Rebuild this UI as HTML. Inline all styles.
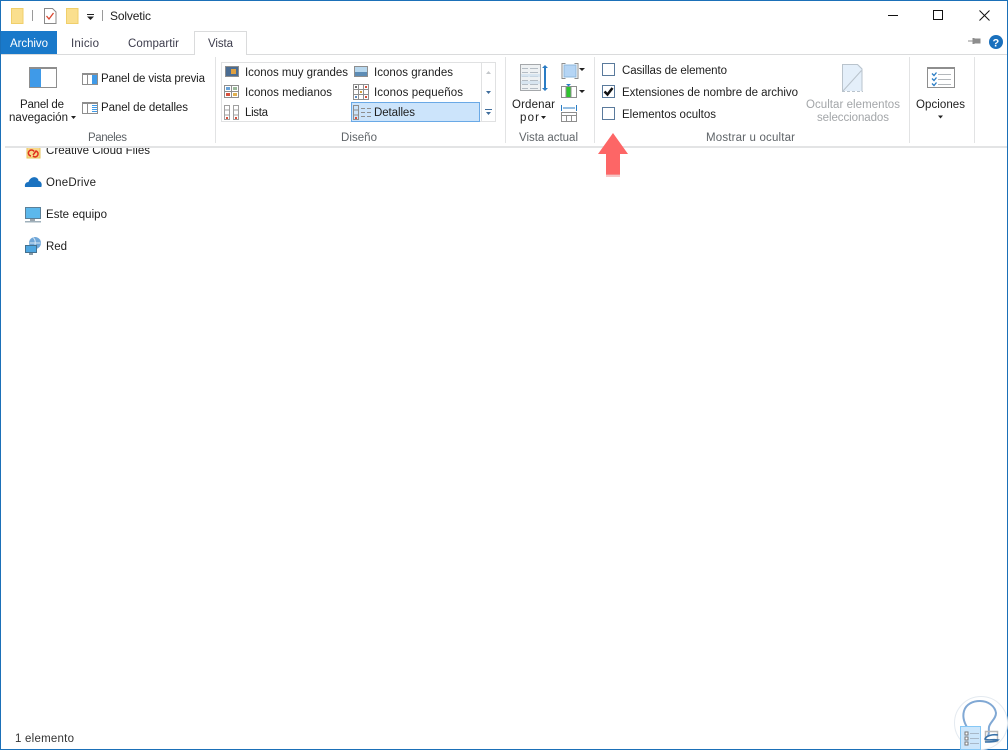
<!DOCTYPE html>
<html lang="es"><head><meta charset="utf-8"><title>Solvetic</title>
<style>
html,body{margin:0;padding:0;background:#fff;width:1008px;height:750px;overflow:hidden}
svg{display:block}
text{font-family:"Liberation Sans",sans-serif;font-size:11.5px;fill:#1e1e1e}
.g{fill:#5f6468}.d{fill:#a3a6a9}
</style></head><body>
<svg width="1008" height="750" viewBox="0 0 1008 750" xmlns="http://www.w3.org/2000/svg">
<rect width="1008" height="750" fill="#fff"/>
<defs><clipPath id="c"><rect x="0" y="148" width="300" height="20"/></clipPath></defs>

<!-- nav items -->
<g clip-path="url(#c)">
<path d="M27 143h13v15h-13z" fill="#f8d98a" stroke="#e6c35c"/>
<text x="46" y="154" textLength="104">Creative Cloud Files</text>
</g>
<path d="M31 156a3 3 0 1 1 3-4.500M33 156a3 3 0 1 0 3-5l-3 4" fill="none" stroke="#e0301e" stroke-width="1.500"/>
<path d="M25 187c-.6-3 1-5 3.500-5 1-4 6-6.500 9-3.500 .7 .7 1 1.500 1 2.500 2.500 0 4 3 2.800 6z" fill="#1a72c0"/>
<text x="46" y="186" textLength="50">OneDrive</text>
<rect x="25.500" y="207.500" width="15" height="11" fill="#5cb8ec" stroke="#5a7f98"/>
<rect x="30" y="219" width="5" height="2" fill="#9aa5ad"/><rect x="25" y="221" width="16" height="1.500" fill="#9fb0bb"/>
<text x="46" y="218" textLength="61">Este equipo</text>
<circle cx="35" cy="243" r="6" fill="#6fa6d8"/>
<path d="M33 237.500c3 2 3 8 0 11M29.500 243h11" stroke="#d8e8f5" fill="none"/>
<rect x="25.500" y="245.500" width="11" height="7" fill="#4ea6e0" stroke="#45708e"/>
<rect x="29" y="253" width="4" height="2" fill="#8a9aa5"/>
<text x="46" y="250" textLength="21">Red</text>

<text x="15" y="742" textLength="59" style="fill:#333">1 elemento</text>

<!-- ribbon frame -->
<rect x="1" y="1" width="1006" height="146" fill="#fff"/>
<rect x="0" y="54" width="1008" height="1" fill="#dadbdc"/>
<rect x="5" y="146" width="1003" height="2" fill="#e3e4e5"/>

<!-- window border -->
<rect x="0" y="0" width="1008" height="1" fill="#1b70b8"/>
<rect x="0" y="0" width="1" height="750" fill="#1b70b8"/>
<rect x="1007" y="0" width="1" height="750" fill="#1b70b8"/>
<rect x="0" y="749" width="1008" height="1" fill="#1b70b8"/>

<!-- quick access -->
<path d="M11.500 8.500h11.500v15h-11.500z" fill="#fadf8e" stroke="#f0cf6a"/>
<rect x="32" y="10" width="1" height="11" fill="#9a9a9a"/>
<path d="M44.500 8.500h8l3.500 3.500v11.500h-11.500z" fill="#fff" stroke="#8a8a8a"/>
<path d="M46.500 16l2.500 3 4.500-6" fill="none" stroke="#d8452e" stroke-width="1.300"/>
<path d="M66.500 8.500h11.500v15h-11.500z" fill="#fadf8e" stroke="#f0cf6a"/>
<rect x="87" y="14" width="7" height="1" fill="#222"/>
<path d="M87 16.500h7l-3.500 3.500z" fill="#222"/>
<rect x="102" y="10" width="1" height="11" fill="#9a9a9a"/>
<text x="110" y="20" textLength="41" style="font-size:12px">Solvetic</text>

<!-- window controls -->
<rect x="888" y="15" width="10" height="1" fill="#111"/>
<rect x="933.500" y="10.500" width="9" height="9" fill="none" stroke="#111"/>
<path d="M979.500 10.500l10 10M989.500 10.500l-10 10" stroke="#111" fill="none"/>

<!-- pin, help -->
<path d="M968 41h5M973 38.500h1v5h-1zM975 39h5v4h-5z" fill="#8d8d8d" stroke="#8d8d8d"/>
<circle cx="996" cy="42" r="7" fill="#1a70bd"/>
<text x="992.500" y="46.500" style="font-size:11px;font-weight:bold;fill:#fff">?</text>

<!-- tabs -->
<rect x="1" y="31" width="56" height="23" fill="#1979ca"/>
<text x="10" y="47" textLength="38" style="fill:#fff">Archivo</text>
<text x="71" y="47" textLength="28" style="fill:#3c3c4c">Inicio</text>
<text x="128" y="47" textLength="51" style="fill:#3c3c4c">Compartir</text>
<path d="M194.500 55v-23.500h52v23.500" fill="#fff" stroke="#dadbdc"/>
<rect x="195" y="54" width="51" height="1" fill="#fff"/>
<text x="208" y="47" textLength="25" style="fill:#3c3c4c">Vista</text>

<!-- separators -->
<rect x="215" y="57" width="1" height="86" fill="#e2e3e4"/>
<rect x="505" y="57" width="1" height="86" fill="#e2e3e4"/>
<rect x="594" y="57" width="1" height="86" fill="#e2e3e4"/>
<rect x="909" y="57" width="1" height="86" fill="#e2e3e4"/>
<rect x="974" y="57" width="1" height="86" fill="#e2e3e4"/>

<!-- Paneles -->
<rect x="29.500" y="67.500" width="27" height="20" fill="#fff" stroke="#8e8e8e"/>
<rect x="29" y="67" width="28" height="2" fill="#8e8e8e"/>
<rect x="30" y="69" width="11" height="18" fill="#3f9ae8"/>
<text x="20" y="108" textLength="44">Panel de</text>
<text x="9" y="121" textLength="59">navegación</text>
<path d="M71 116h5l-2.500 3z" fill="#222"/>
<rect x="82.500" y="73.500" width="15" height="11" fill="#fff" stroke="#8e8e8e"/>
<rect x="82" y="73" width="16" height="2" fill="#8e8e8e"/>
<rect x="87" y="75" width="1" height="9" fill="#8e8e8e"/>
<rect x="92" y="75" width="5" height="9" fill="#3f9ae8"/>
<text x="101" y="82" textLength="104">Panel de vista previa</text>
<rect x="82.500" y="102.500" width="15" height="11" fill="#fff" stroke="#8e8e8e"/>
<rect x="82" y="102" width="16" height="2" fill="#8e8e8e"/>
<rect x="87" y="104" width="1" height="9" fill="#8e8e8e"/>
<path d="M92 105.500h5M92 107.500h5M92 109.500h5M92 111.500h5" stroke="#3f9ae8"/>
<text x="101" y="111" textLength="87">Panel de detalles</text>
<text x="88" y="141" textLength="39" class="g">Paneles</text>

<!-- Diseño gallery -->
<rect x="221.500" y="62.500" width="274" height="59" fill="#fff" stroke="#e0e1e2"/>
<rect x="481" y="63" width="1" height="58" fill="#e0e1e2"/>
<rect x="351.500" y="102.500" width="128" height="19" fill="#cce4fb" stroke="#6aa9e6"/>
<rect x="225.500" y="66.500" width="13" height="10" fill="#4a6c92" stroke="#8e8e8e"/>
<rect x="231" y="69" width="5" height="5" fill="#e0a040"/>
<text x="245" y="76" textLength="103">Iconos muy grandes</text>
<g fill="#fff" stroke="#8e8e8e"><rect x="224.500" y="85.500" width="14" height="12"/></g>
<rect x="225" y="91" width="14" height="1" fill="#8e8e8e"/><rect x="231" y="86" width="1" height="12" fill="#8e8e8e"/>
<rect x="226" y="87" width="4" height="3" fill="#6aa3d8"/><rect x="233" y="87" width="4" height="3" fill="#9ab89a"/>
<rect x="226" y="93" width="4" height="3" fill="#d8503c"/><rect x="233" y="93" width="4" height="3" fill="#e0b050"/>
<text x="245" y="96" textLength="87">Iconos medianos</text>
<g fill="none" stroke="#a0a0a0"><rect x="224.500" y="105.500" width="5" height="14"/><rect x="233.500" y="105.500" width="5" height="14"/><path d="M225 110h4M225 115h4M234 110h4M234 115h4"/></g>
<rect x="226" y="117" width="2" height="2" fill="#d8503c"/><rect x="235" y="117" width="2" height="2" fill="#d8503c"/>
<text x="245" y="116" textLength="23">Lista</text>

<rect x="354.500" y="66.500" width="13" height="10" fill="#5d8cb5" stroke="#8e8e8e"/>
<rect x="355" y="67" width="12" height="5" fill="#b7d7ee"/>
<text x="374" y="76" textLength="79">Iconos grandes</text>
<g fill="#fff" stroke="#8e8e8e"><rect x="353.500" y="84.500" width="15" height="15"/><path d="M358.500 85v14M363.500 85v14M354 89.500h14M354 94.500h14"/></g>
<rect x="355" y="86" width="2" height="2" fill="#6a6a6a"/><rect x="365" y="86" width="2" height="2" fill="#d8503c"/><rect x="360" y="91" width="2" height="2" fill="#d8a040"/><rect x="355" y="96" width="2" height="2" fill="#5a8ac0"/><rect x="365" y="96" width="2" height="2" fill="#d8503c"/>
<text x="374" y="96" textLength="89">Iconos pequeños</text>
<g fill="none" stroke="#8e8e8e"><rect x="353.500" y="105.500" width="5" height="14"/><path d="M354 110h4M354 115h4M361 108.500h4M367 108.500h4M361 112.500h4M367 112.500h4M361 116.500h4M367 116.500h4"/></g>
<rect x="355" y="117" width="2" height="2" fill="#d8503c"/>
<text x="374" y="116" textLength="41">Detalles</text>
<text x="341" y="141" textLength="36" class="g">Diseño</text>

<path d="M486 74l2.500-3 2.500 3z" fill="#c4c7ca"/>
<path d="M486 91h5l-2.500 3z" fill="#3f6d9c"/>
<rect x="485" y="109" width="7" height="1" fill="#3f6d9c"/><path d="M486 112h5l-2.500 3z" fill="#3f6d9c"/>

<!-- Vista actual -->
<rect x="520.500" y="64.500" width="20" height="26" fill="#eef1f3" stroke="#a5a8ab"/>
<path d="M522 68.500h6M530 68.500h8M522 72.500h6M530 72.500h8M522 76.500h6M530 76.500h8M522 80.500h6M530 80.500h8M522 84.500h6M530 84.500h8M522 88.500h6M530 88.500h8" stroke="#b4bcc4"/>
<rect x="521" y="74" width="19" height="3" fill="#cfe0ee" opacity=".7"/><rect x="521" y="81" width="19" height="3" fill="#cfe0ee" opacity=".7"/>
<path d="M545 66v24" stroke="#2a7cc4" stroke-width="2"/>
<path d="M542 68l3-3 3 3zM542 88l3 3 3-3z" fill="#2a7cc4"/>
<text x="512" y="108" textLength="43">Ordenar</text>
<text x="520" y="121" textLength="19">por</text>
<path d="M541 116h5l-2.500 3z" fill="#222"/>

<rect x="564" y="65" width="12" height="12" fill="#b5d5f5" stroke="#8fb8dc"/>
<path d="M565.500 63.500h-3.500v15h3.500M574.500 63.500h3.500v15h-3.500" fill="none" stroke="#8e8e8e"/>
<path d="M579 68h6l-3 3z" fill="#222"/>
<rect x="561.500" y="86.500" width="15" height="11" fill="#fff" stroke="#8e8e8e"/>
<rect x="566" y="87" width="5" height="10" fill="#2fc52f"/>
<path d="M566 84h5l-2.500 2.500z" fill="#2a7cc4"/>
<path d="M566 87v10M571 87v10" stroke="#8e8e8e"/>
<path d="M579 90h6l-3 3z" fill="#222"/>
<path d="M561.500 105v6M576.500 105v6M563 108h12" stroke="#2a7cc4" fill="none"/>
<rect x="561.500" y="112.500" width="15" height="9" fill="#fff" stroke="#8e8e8e"/>
<path d="M562 115.500h15M566.500 115v6M571.500 115v6" stroke="#8e8e8e"/>
<text x="519" y="141" textLength="59" class="g">Vista actual</text>

<!-- Mostrar u ocultar -->
<rect x="602.500" y="63.500" width="12" height="12" fill="#fff" stroke="#5a7a9c"/>
<text x="622" y="74" textLength="105">Casillas de elemento</text>
<rect x="602.500" y="85.500" width="12" height="12" fill="#fff" stroke="#5a7a9c"/>
<path d="M604.500 91.500l3 3 5-6.500" fill="none" stroke="#111" stroke-width="2.500"/>
<text x="622" y="96" textLength="176">Extensiones de nombre de archivo</text>
<rect x="602.500" y="107.500" width="12" height="12" fill="#fff" stroke="#5a7a9c"/>
<text x="622" y="118" textLength="94">Elementos ocultos</text>

<path d="M842.500 64.500h16l4 4v22.500h-20z" fill="#e4effa" stroke="none"/>
<path d="M842.500 91.500l19-21" stroke="#b9c3cc" fill="none"/>
<path d="M842.500 91v-26.500h15l4.500 4.500v22.500" fill="none" stroke="#b9c3cc"/>
<path d="M842 91.500h21" stroke="#b9c3cc" stroke-dasharray="3 2"/>
<text x="806" y="108" textLength="94" class="d">Ocultar elementos</text>
<text x="817" y="121" textLength="72" class="d">seleccionados</text>
<text x="706" y="141" textLength="89" class="g">Mostrar u ocultar</text>

<!-- Opciones -->
<rect x="927.500" y="67.500" width="27" height="20" fill="#fff" stroke="#8e8e8e"/>
<rect x="927" y="67" width="28" height="2" fill="#8e8e8e"/>
<path d="M938 74.500h13M938 79.500h13M938 84.500h13" stroke="#b4b8bc"/>
<path d="M932 73.500l2 2 2.500-3M932 78.500l2 2 2.500-3M932 83.500l2 2 2.500-3" stroke="#2a7cc4" fill="none" stroke-width="1.300"/>
<text x="916" y="108" textLength="49">Opciones</text>
<path d="M938 115.500h5l-2.500 3z" fill="#222"/>

<!-- red arrow -->
<path d="M613 133l15 21h-8v21h-14v-21h-8z" fill="#fd6666"/>
<rect x="606" y="174" width="14" height="3" fill="#f1a0a0" opacity=".6"/>

<!-- watermark -->
<circle cx="981" cy="723" r="26.500" fill="#fff" stroke="#e4eaf0"/>
<path d="M968 729c-3-5-6-11-4-18 2-7 9-10 16-10 8 0 15 5 16 12 0 6-6 9-7 14-.5 3 .5 6-1 9" fill="none" stroke="#80a8d4" stroke-width="2"/>
<rect x="960.500" y="726.500" width="20" height="23" fill="#cce6fb" stroke="#86c8f6"/>
<rect x="965" y="732" width="3" height="3" fill="#fff" stroke="#777"/><rect x="965" y="737" width="3" height="3" fill="#fff" stroke="#777"/><rect x="965" y="742" width="3" height="3" fill="#fff" stroke="#777"/>
<path d="M970 733.500h9M970 738.500h9M970 743.500h9" stroke="#a8b8c8"/>
<rect x="985.500" y="731.500" width="12" height="10" fill="none" stroke="#b8b8b8" stroke-width="1.500"/>
<path d="M998 735c-6-1-12 1-13 4 2 2 8 0 13 1-3 2-8 2-13 2" fill="none" stroke="#3a72a8" stroke-width="1.600"/>
</svg>
</body></html>
